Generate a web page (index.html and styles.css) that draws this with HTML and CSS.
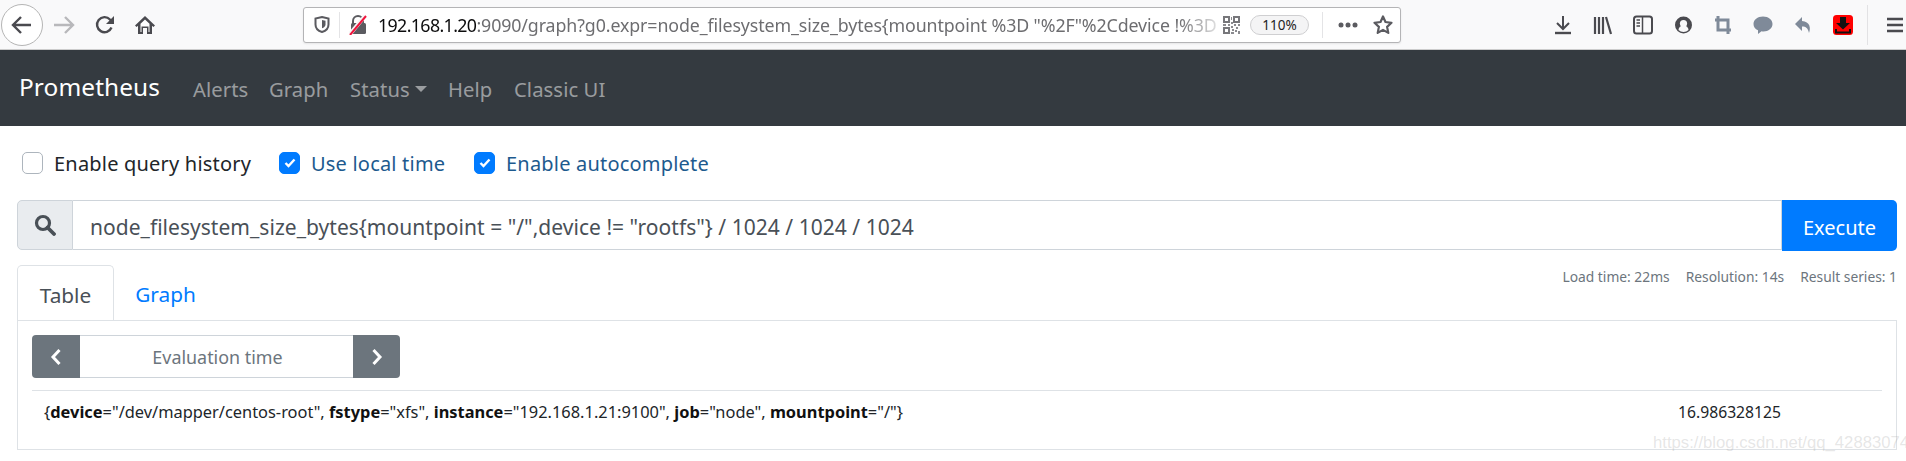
FILE: index.html
```html
<!DOCTYPE html>
<html lang="en">
<head>
<meta charset="utf-8">
<title>Prometheus Time Series Collection and Processing Server</title>
<link rel="stylesheet" href="styles.css">
</head>
<body>
<div class="chrome">
  <div class="back"><svg width="22" height="20" viewBox="0 0 22 20"><path d="M20 10H3M10 2l-8 8 8 8" fill="none" stroke="#4a4a4f" stroke-width="2.4"/></svg></div>
  <svg class="ic fwd" width="22" height="20" viewBox="0 0 22 20"><path d="M1 10h18M12 2l8 8-8 8" fill="none" stroke="#b8b8bb" stroke-width="2.4"/></svg>
  <svg class="ic reload" width="20" height="20" viewBox="0 0 20 20"><path d="M16.5 12.5A7.5 7.5 0 1 1 15 4.5L17.5 7" fill="none" stroke="#4a4a4f" stroke-width="2.4"/><path d="M19 1v8h-8z" fill="#4a4a4f"/></svg>
  <svg class="ic home" width="20" height="20" viewBox="0 0 20 20"><path d="M10 1L0 10.5l1.6 1.6L3 10.8V19h5v-6h4v6h5v-8.200l1.400 1.300 1.600-1.600z" fill="#4a4a4f"/><path d="M10 4.500l4.500 4.300V17h-1v-5.500h-7V17h-1V8.800z" fill="#fff"/></svg>
  <div class="urlbar">
    <svg class="shield" width="16" height="17" viewBox="0 0 16 17"><path d="M8 1l6.500 1.500v6c0 4-3 6.500-6.500 7.500C4.500 15 1.500 12.500 1.500 8.500v-6z" fill="none" stroke="#5b5b60" stroke-width="2"/><path d="M8 4l3.500.8v3.500c0 2-1.500 3.400-3.500 4z" fill="#5b5b60"/></svg>
    <span class="urlsep"></span>
    <svg class="lock" width="18" height="20" viewBox="0 0 18 20"><path d="M4 9V6a5 5 0 0 1 10 0v3" fill="none" stroke="#5b5b60" stroke-width="2"/><rect x="2" y="8" width="15" height="11" rx="1.500" fill="#5b5b60"/><path d="M1 19L16 1" stroke="#f6f6f6" stroke-width="4"/><path d="M1 20L17 1" stroke="#f0143c" stroke-width="2"/></svg>
    <span class="url"><span class="host">192.168.1.20</span>:9090/graph?g0.expr=node_filesystem_size_bytes{mountpoint %3D "%2F"%2Cdevice !%3D</span>
    <svg class="qr" width="17" height="18" viewBox="0 0 17 18"><path d="M0 0h7v7H0zM10 0h7v7h-7zM0 11h7v7H0zM2 2v3h3V2zM12 2v3h3V2zM2 13v3h3v-3z" fill="#77777b" fill-rule="evenodd"/><path d="M8 1h1v3H8zM8 6h2v2H8zM0 8h3v2H0zM5 8h2v2H5zM11 8h2v2h-2zM15 8h2v2h-2zM8 10h2v2H8zM9 13h2v2H9zM13 11h2v2h-2zM12 14h2v2h-2zM15 15h2v3h-2zM8 16h3v2H8z" fill="#8b8b8f"/></svg>
    <span class="zoomed">110%</span>
    <span class="urlsep sep2"></span>
    <svg class="dots" width="20" height="6" viewBox="0 0 20 6"><circle cx="3" cy="3" r="2.500" fill="#5b5b60"/><circle cx="10" cy="3" r="2.500" fill="#5b5b60"/><circle cx="17" cy="3" r="2.500" fill="#5b5b60"/></svg>
    <svg class="star" width="20" height="20" viewBox="0 0 20 20"><path d="M10 1.500l2.500 5.500 6 .8-4.400 4.100 1.200 6-5.300-3-5.300 3 1.200-6-4.400-4.100 6-.8z" fill="none" stroke="#5b5b60" stroke-width="2.200" stroke-linejoin="round"/></svg>
  </div>
  <div class="tools">
    <svg width="18" height="20" viewBox="0 0 18 20"><path d="M9 1v12M3 8l6 6 6-6" fill="none" stroke="#4a4a4f" stroke-width="2"/><path d="M1 18h16" stroke="#4a4a4f" stroke-width="2.400"/></svg>
    <svg width="19" height="20" viewBox="0 0 19 20"><path d="M2 2v17M6 2v17M10 2v17M13 2l5 17" stroke="#4a4a4f" stroke-width="2.200" fill="none"/></svg>
    <svg width="20" height="20" viewBox="0 0 20 20"><rect x="1" y="1.500" width="18" height="17" rx="2.500" fill="none" stroke="#4a4a4f" stroke-width="2"/><path d="M9.500 2v16" stroke="#4a4a4f" stroke-width="1.500"/><path d="M3.500 5h3.500M3.500 8h3.500M3.500 11h3.500" stroke="#4a4a4f" stroke-width="1.300"/></svg>
    <svg width="19" height="20" viewBox="0 0 19 20"><circle cx="9.500" cy="10" r="8.500" fill="#4a4a4f"/><circle cx="9.500" cy="8.500" r="3.600" fill="#f9f9fa"/><path d="M4.500 15a5 4.500 0 0 1 10 0a7 7 0 0 1-10 0z" fill="#f9f9fa"/></svg>
    <svg width="18" height="20" viewBox="0 0 18 20"><path d="M4 1v14h13M1 5h13v14" fill="none" stroke="#7f8a99" stroke-width="3"/></svg>
    <svg width="20" height="20" viewBox="0 0 20 20"><path d="M10 1.500c5.500 0 9.500 3.400 9.500 7.500s-4 7.500-9 7.500c-.7 0-1.400 0-2-.2L5 19v-3.700C2 14 .5 11.700.5 9c0-4.100 4-7.500 9.500-7.500z" fill="#7f8a99"/></svg>
    <svg width="18" height="20" viewBox="0 0 18 20"><path d="M8 2L1 9l7 7v-4.500c4 0 6 1.500 7 6.500 2-5 1-11.500-7-12z" fill="#7f8a99"/></svg>
    <svg width="20" height="20" viewBox="0 0 20 20"><rect width="20" height="20" rx="3.500" fill="#f00"/><path d="M7 2h6v6h4l-7 6.500L3 8h4z" fill="#111"/><path d="M3 14v3.500h14V14" fill="none" stroke="#111" stroke-width="2"/></svg>
    <span class="toolsep"></span>
    <svg class="burger" width="16" height="16" viewBox="0 0 16 16"><path d="M0 2h16M0 8h16M0 14h16" stroke="#4a4a4f" stroke-width="2.400"/></svg>
  </div>
</div>

<nav class="navbar">
  <a class="brand">Prometheus</a>
  <a class="nav-link alerts">Alerts</a>
  <a class="nav-link graph">Graph</a>
  <a class="nav-link status">Status<i class="caret"></i></a>
  <a class="nav-link help">Help</a>
  <a class="nav-link classic">Classic UI</a>
</nav>

<main class="page">
  <div class="options">
    <label class="opt opt-history"><span class="box"></span>Enable query history</label>
    <label class="opt on opt-time"><span class="box"><svg width="12" height="10" viewBox="0 0 12 10"><path d="M1.500 5l3 3 6-6.500" fill="none" stroke="#fff" stroke-width="2.400"/></svg></span>Use local time</label>
    <label class="opt on opt-auto"><span class="box"><svg width="12" height="10" viewBox="0 0 12 10"><path d="M1.500 5l3 3 6-6.500" fill="none" stroke="#fff" stroke-width="2.400"/></svg></span>Enable autocomplete</label>
  </div>

  <div class="query">
    <span class="addon"><svg width="22" height="22" viewBox="0 0 22 22"><circle cx="9" cy="9" r="6.500" fill="none" stroke="#495057" stroke-width="3.200"/><path d="M13.500 13.500l6.500 6.500" stroke="#495057" stroke-width="3.800" stroke-linecap="round"/></svg></span>
    <div class="expr">node_filesystem_size_bytes{mountpoint = "/",device != "rootfs"} / 1024 / 1024 / 1024</div>
    <button class="execute">Execute</button>
  </div>

  <div class="tabs-row">
    <div class="tab active">Table</div>
    <div class="tab link">Graph</div>
    <div class="stats"><span>Load time: 22ms</span><span>Resolution: 14s</span><span>Result series: 1</span></div>
  </div>

  <section class="panel">
    <div class="evalgroup">
      <button class="step"><svg width="12" height="18" viewBox="0 0 12 18"><path d="M9.500 2L3 9l6.500 7" fill="none" stroke="#fff" stroke-width="3"/></svg></button>
      <div class="evaltime">Evaluation time</div>
      <button class="step stepnext"><svg width="12" height="18" viewBox="0 0 12 18"><path d="M2.500 2L9 9l-6.500 7" fill="none" stroke="#fff" stroke-width="3"/></svg></button>
    </div>
    <div class="row">
      <div class="series">{<b>device</b>="/dev/mapper/centos-root", <b>fstype</b>="xfs", <b>instance</b>="192.168.1.21:9100", <b>job</b>="node", <b>mountpoint</b>="/"}</div>
      <div class="value">16.986328125</div>
    </div>
  </section>
</main>
<div class="watermark">https://blog.csdn.net/qq_42883074</div>
</body>
</html>
```
FILE: styles.css
```css
* { box-sizing: border-box; }
html, body { margin: 0; height: 461px; overflow: hidden; background: #fff; }
body { font-family: "Noto Sans", "Open Sans", sans-serif; font-size: 17.6px; color: #212529; position: relative; }

.chrome { height: 50px; background: #f9f9fa; border-bottom: 1px solid #ccc; display: flex; align-items: center; padding-left: 1px; }
.chrome svg { flex: none; display: block; }
.back { width: 42px; height: 42px; border: 1px solid #b5b5b5; border-radius: 50%; background: #fff; display: flex; align-items: center; justify-content: center; flex: none; }
.ic.fwd { margin-left: 10px; }
.ic.reload { margin-left: 20px; }
.ic.home { margin-left: 20px; }
.urlbar { margin-left: 148px; width: 1098px; height: 36px; background: #fff; border: 1px solid #b4b4b6; border-radius: 3px; display: flex; align-items: center; flex: none; box-shadow: 0 1px 2px rgba(0,0,0,.08); }
.shield { margin-left: 10px; }
.urlsep { width: 1px; height: 26px; background: #e4e4e6; margin-left: 9px; flex: none; }
.lock { margin-left: 9px; }
.url { margin-left: 11px; width: 842px; flex: none; overflow: hidden; white-space: nowrap; color: #6d6d70; font-size: 17.8px; letter-spacing: -.1px; -webkit-mask-image: linear-gradient(to right, #000 95%, rgba(0,0,0,.15) 100%); mask-image: linear-gradient(to right, #000 95%, rgba(0,0,0,.15) 100%); }
.host { color: #0c0c0d; letter-spacing: -.62px; }
.qr { margin-left: 3px; }
.zoomed { margin-left: 10px; width: 59px; height: 20px; border: 1px solid #cfcfd1; border-radius: 10px; background: #f4f4f5; font-size: 13.500px; line-height: 18px; text-align: center; color: #222; flex: none; }
.sep2 { margin-left: 13px; }
.dots { margin-left: 15px; }
.star { margin-left: 15px; }
.tools { display: flex; align-items: center; margin-left: 153px; gap: 21px; }
.toolsep { width: 1px; height: 40px; background: #e2e2e4; margin-left: -7px; flex: none; }
.burger { margin-left: -2px; }

.navbar { height: 76px; background: #343a40; display: flex; align-items: center; padding-left: 19px; }
.brand { color: #fff; font-size: 24.400px; letter-spacing: .1px; width: 174px; flex: none; position: relative; top: -2px; }
.nav-link { color: rgba(255,255,255,.5); flex: none; letter-spacing: .1px; font-size: 20.200px; padding-top: 2px; }
.alerts { width: 76px; }
.graph { width: 81px; }
.status { width: 98px; display: flex; align-items: center; }
.help { width: 66px; }
.caret { display: block; margin-left: 5px; border: 6px solid transparent; border-top-color: rgba(255,255,255,.5); border-bottom: 0; }

.page { padding: 0 9px 0 17px; }
.options { height: 74px; display: flex; align-items: center; padding-left: 5px; }
.opt { display: flex; align-items: center; flex: none; font-size: 20px; letter-spacing: .2px; }
.opt-history { width: 257px; }
.opt-time { width: 195px; }
.on { color: #1d5a8e; }
.box { width: 21px; height: 22px; border: 1px solid #adb5bd; border-radius: 5px; background: #fff; margin-right: 11px; display: flex; align-items: center; justify-content: center; flex: none; }
.on .box { background: #007bff; border-color: #007bff; }

.query { display: flex; height: 50px; border-radius: 5px; }
.addon { width: 56px; flex: none; background: #e9ecef; border: 1px solid #ced4da; border-radius: 5px 0 0 5px; display: flex; align-items: center; justify-content: center; }
.expr { flex: 1; border: 1px solid #ced4da; border-left: 0; color: #495057; padding: 3px 0 0 17px; display: flex; align-items: center; font-size: 21px; letter-spacing: .03px; white-space: pre; }
.execute { width: 115px; flex: none; height: 51px; background: #007bff; color: #fff; border: 0; border-radius: 0 5px 5px 0; font: inherit; font-size: 20px; padding: 3px 0 0; }

.tabs-row { display: flex; height: 55px; margin-top: 15px; position: relative; }
.tab { height: 55px; display: flex; align-items: center; justify-content: center; font-size: 20.800px; padding-top: 3px; }
.tab.active { width: 97px; color: #495057; background: #fff; border: 1px solid #dee2e6; border-bottom: 0; border-radius: 5px 5px 0 0; }
.tab.link { width: 103px; color: #007bff; }
.stats { margin-left: auto; display: flex; gap: 16px; font-size: 13.800px; color: #6c757d; height: 22px; align-items: center; }

.panel { height: 130px; border: 1px solid #dee2e6; padding: 14px; }
.evalgroup { display: flex; width: 368px; height: 43px; }
.step { width: 48px; flex: none; background: #6c757d; border: 0; padding: 0; display: flex; align-items: center; justify-content: center; }
.step:first-child { border-radius: 4px 0 0 4px; }
.step:last-child { border-radius: 0 4px 4px 0; }
.stepnext { width: 47px; }
.evaltime { flex: 1; border: 1px solid #ced4da; border-width: 1px 0; color: #6c757d; font-size: 17.900px; display: flex; align-items: center; justify-content: center; padding-left: 2px; }
.row { margin-top: 12px; border-top: 1px solid #dee2e6; display: flex; justify-content: space-between; height: 50px; padding: 9px 101px 0 12px; font-size: 16.400px; color: #212529; }
.series b { font-weight: 700; color: #111; }
.value { font-size: 15.700px; margin-top: 1px; }

.watermark { position: absolute; left: 1653px; top: 433px; font-family: "Liberation Sans", sans-serif; font-size: 16.700px; color: rgba(170,170,170,.3); white-space: nowrap; }
```
